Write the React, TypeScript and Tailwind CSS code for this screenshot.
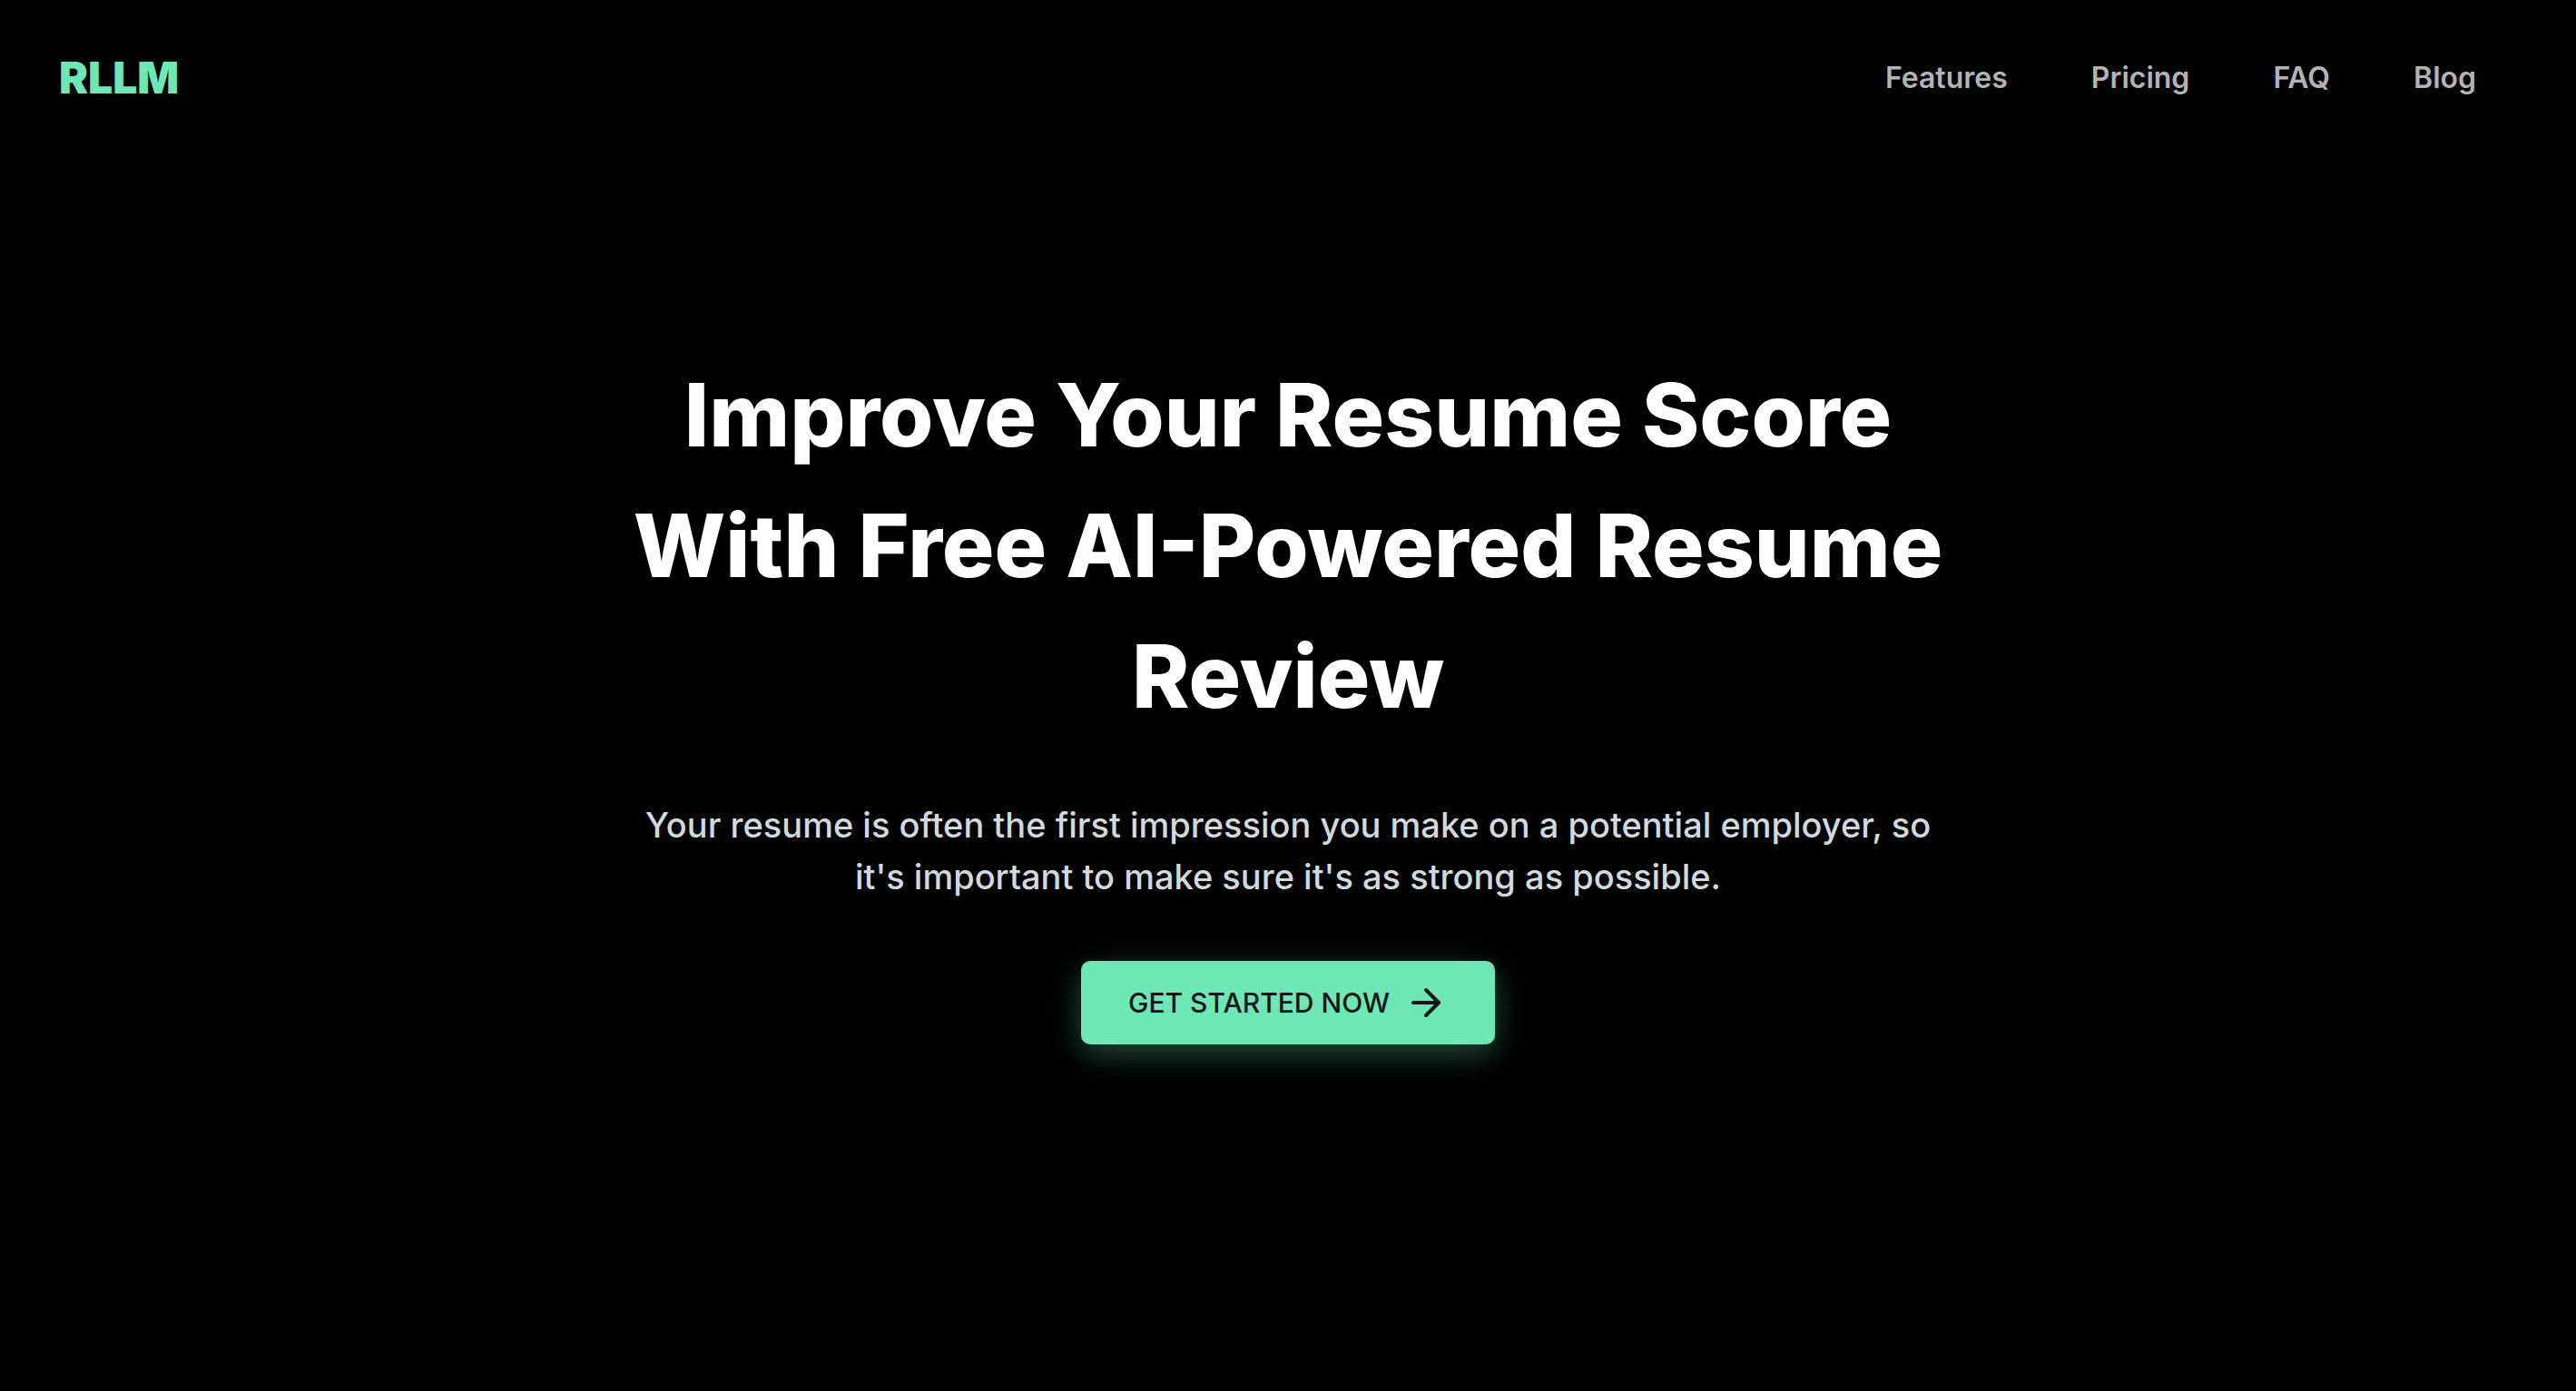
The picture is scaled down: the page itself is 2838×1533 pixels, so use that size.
import React from "react";
import { ArrowRight } from "lucide-react";

const links = ["Features", "Pricing", "FAQ", "Blog"];

export default function App() {
  return (
    <div className="min-h-screen bg-black font-['Inter',sans-serif] text-white">
      <header className="flex items-center justify-between pt-14 pr-[110px] pl-[65px]">
        <a href="#" className="text-[48px] leading-[60px] font-black text-[#6ee7b7]">
          RLLM
        </a>
        <nav className="flex gap-[92px]">
          {links.map((label) => (
            <a key={label} href="#" className="text-[32px] leading-[48px] font-semibold text-[#b3b3b3]">
              {label}
            </a>
          ))}
        </nav>
      </header>
      <main className="mx-auto flex max-w-[1536px] flex-col items-center pt-[269px] text-center">
        <h1 className="text-[96px] leading-[144px] font-extrabold">
          Improve Your Resume Score With Free AI-Powered Resume Review
        </h1>
        <p className="mt-16 max-w-[1472px] text-[38px] leading-[57px] font-medium text-[#d1d9dc]">
          Your resume is often the first impression you make on a potential employer, so it's important to make sure it's as strong as possible.
        </p>
        <button
          type="button"
          className="mt-16 flex items-center gap-4 rounded-[10px] bg-[#6ee7b7] px-[52px] py-[22px] text-[30px] leading-[48px] font-medium text-[#111618] shadow-[0_8px_48px_rgba(110,231,183,0.12),0_12px_32px_rgba(110,231,183,0.22)]"
        >
          GET STARTED NOW
          <ArrowRight size={48} strokeWidth={2} aria-hidden="true" />
        </button>
      </main>
    </div>
  );
}
